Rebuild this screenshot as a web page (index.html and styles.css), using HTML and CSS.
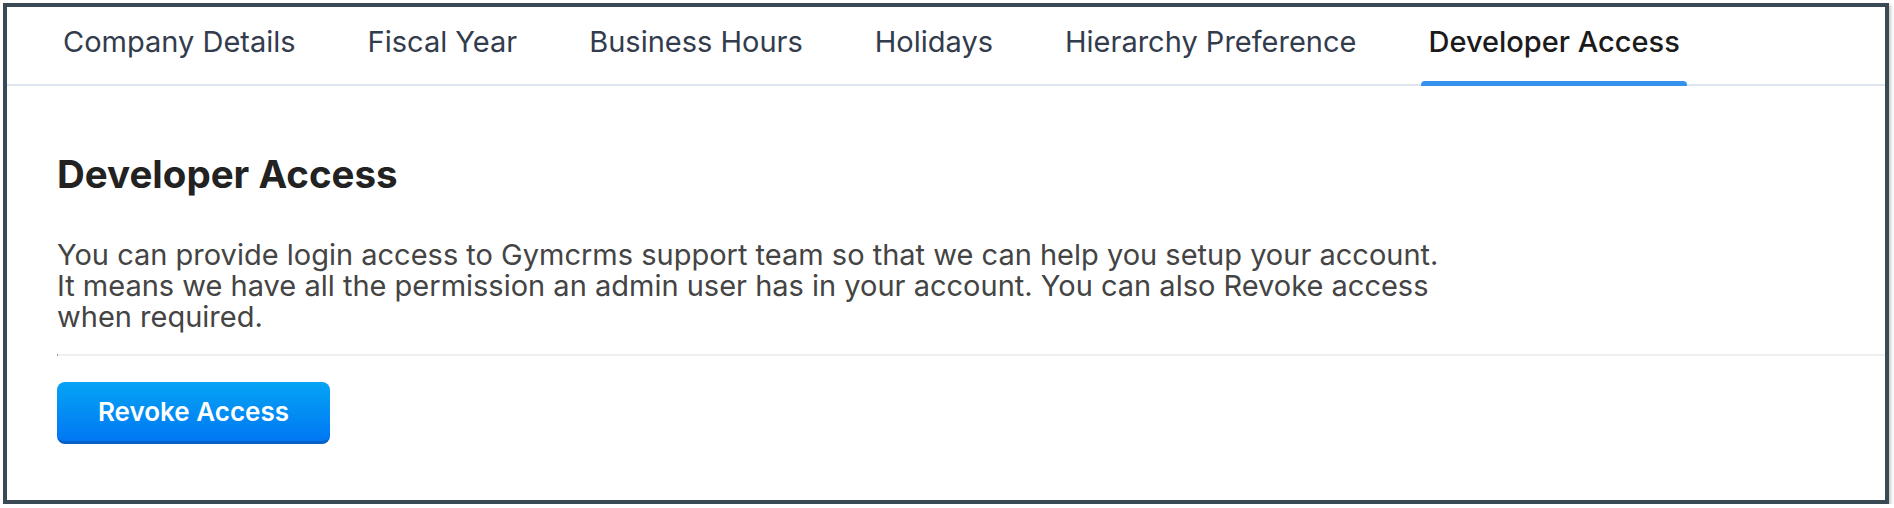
FILE: index.html
```html
<!DOCTYPE html>
<html lang="en">
<head>
<meta charset="utf-8">
<title>Developer Access</title>
<link rel="stylesheet" href="styles.css">
</head>
<body>
<div class="frame">
  <nav class="tabs">
    <div class="tab">Company Details</div>
    <div class="tab">Fiscal Year</div>
    <div class="tab">Business Hours</div>
    <div class="tab">Holidays</div>
    <div class="tab">Hierarchy Preference</div>
    <div class="tab active">Developer Access</div>
  </nav>
  <section class="content">
    <h1 class="title">Developer Access</h1>
    <p class="desc"><span class="line">You can provide login access to Gymcrms support team so that we can help you setup your account.</span><span class="line">It means we have all the permission an admin user has in your account. You can also Revoke access</span><span class="line">when required.</span></p>
    <div class="sep"></div>
    <button class="btn">Revoke Access</button>
  </section>
</div>
</body>
</html>
```
FILE: styles.css
```css
html, body {
  margin: 0;
  padding: 0;
  background: #ffffff;
}
body {
  font-family: "Inter", "Liberation Sans", sans-serif;
}
.frame {
  margin: 3px 0 0 3px;
  width: 1886px;
  height: 501px;
  box-sizing: border-box;
  border: 4px solid #3a4a55;
  box-shadow: 2px 2px 3px rgba(0, 0, 0, 0.22);
  background: #fff;
  overflow: hidden;
}
.tabs {
  display: flex;
  gap: 58px;
  padding-left: 49px;
  height: 77px;
  border-bottom: 2px solid #dde5ef;
}
.tab {
  position: relative;
  padding: 20px 7px 0;
  font-size: 29px;
  line-height: 30px;
  color: #323c4c;
  white-space: nowrap;
}
.tab.active {
  color: #1b1b1b;
  font-weight: 500;
}
.tab.active::after {
  content: "";
  position: absolute;
  left: 0;
  right: 0;
  bottom: -2px;
  height: 5px;
  background: #3591ee;
  border-radius: 4px 4px 0 0;
}
.content {
  padding-left: 50px;
}
.title {
  margin: 66px 0 0;
  font-size: 38.5px;
  line-height: 44px;
  font-weight: 700;
  color: #222;
}
.desc {
  margin: 43px 0 0;
  font-size: 29px;
  line-height: 31px;
  color: #444;
  display: flex;
  flex-direction: column;
}
.line {
  display: block;
  height: 31px;
  white-space: nowrap;
}
.sep {
  margin-top: 22px;
  height: 2px;
  background: #f0f0f0;
  border-left: 1px solid #999;
}
.btn {
  margin-top: 26px;
  width: 273px;
  height: 62px;
  border: 0;
  border-bottom: 3px solid #0461c8;
  border-radius: 8px;
  background: linear-gradient(#05a4f5, #0077f3);
  color: #fff;
  font-family: inherit;
  font-size: 26px;
  font-weight: 600;
  padding: 0;
  display: block;
}
```
